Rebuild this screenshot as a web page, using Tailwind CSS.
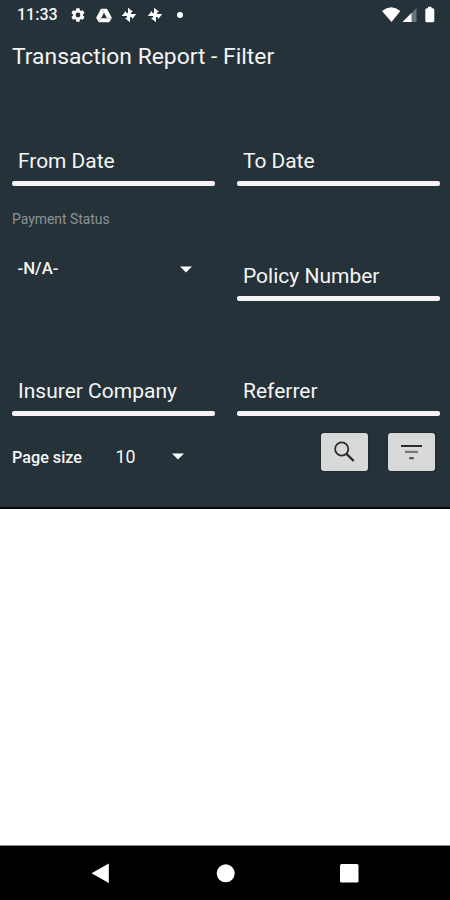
<!DOCTYPE html>
<html lang="en">
<head>
<meta charset="utf-8">
<title>Transaction Report - Filter</title>
<script src="https://cdn.jsdelivr.net/npm/@tailwindcss/browser@4"></script>
</head>
<body class="bg-white">
<svg class="hidden">
  <symbol id="pinwheel" viewBox="0 0 16 16">
    <g fill="#fff">
      <path d="M7 9V.8L12 4.700 10 5.500V8z"/>
      <path d="M7 9V.8L12 4.700 10 5.500V8z" transform="rotate(90 8 8)"/>
      <path d="M7 9V.8L12 4.700 10 5.500V8z" transform="rotate(180 8 8)"/>
      <path d="M7 9V.8L12 4.700 10 5.500V8z" transform="rotate(270 8 8)"/>
    </g>
  </symbol>
</svg>
<div class="flex flex-col w-[450px] h-[900px] overflow-hidden font-[Roboto,sans-serif] text-[#f5f5f5]">
  <main class="h-[509px] bg-[#263239] border-b-2 border-[#05090b] flex flex-col">
    <header class="h-[30px] flex items-center pl-[17px] pr-[14px]">
      <span class="w-[53px] text-[16px] font-medium whitespace-nowrap leading-[30px]">11:33</span>
      <svg class="size-4" viewBox="0 0 24 24"><path fill="#fff" fill-rule="evenodd" d="M19.4 13c.1-.6.1-1.4 0-2l2.1-1.600c.2-.2.3-.5.100-.700l-2-3.400c-.1-.3-.4-.4-.6-.3l-2.500 1-1.700-1-.4-2.600c0-.2-.2-.4-.5-.4h-4c-.2 0-.4.200-.5.400l-.4 2.600-1.700 1-2.400-1c-.3-.1-.5 0-.6.300l-2 3.400c-.1.2-.1.500.1.700L4.600 11c-.1.600-.1 1.400 0 2l-2.200 1.600c-.2.200-.2.500-.1.700l2 3.400c.1.300.4.400.6.300l2.400-1 1.700 1 .4 2.600c.1.200.3.400.5.400h4c.3 0 .5-.2.500-.4l.4-2.600 1.700-1 2.500 1c.2.100.5 0 .6-.3l2-3.400c.2-.2.100-.5-.1-.7zM12 15.600a3.600 3.600 0 1 1 0-7.200 3.600 3.600 0 0 1 0 7.200z"/></svg>
      <svg class="w-4 h-[15px] ml-[10px]" viewBox="0 0 16 15"><path fill="#fff" stroke="#fff" stroke-width="1.600" stroke-linejoin="round" d="M5.600 1.500h4.800l4.600 8.400-2.300 3.600H3.300L1 9.900z"/><path fill="#263239" d="M8 4.800 5 10.200h6z"/><path fill="none" stroke="#8d9599" stroke-width=".6" d="M8 4.800 6.200 1.600M5 10.200 3 13.500M11 10.200h4"/></svg>
      <svg class="size-4 ml-[9px]"><use href="#pinwheel"/></svg>
      <svg class="size-4 ml-[10px]"><use href="#pinwheel"/></svg>
      <span class="size-[6px] ml-[14px] rounded-full bg-white"></span>
      <svg class="ml-auto w-[54px] h-[18px]" viewBox="0 0 54 18"><path fill="#fff" d="M0 4.900Q9.200-2.300 18.400 4.900L9.500 16z"/><path fill="#69737a" d="M34.500 2v14h-14z"/><path fill="#fff" d="M29.500 7v9h-9z"/><path fill="#fff" d="M44.800 2.200h1.200V.8h3.600v1.400h1.200q1.500 0 1.500 1.500v11q0 1.500-1.500 1.500h-6q-1.500 0-1.500-1.500v-11q0-1.500 1.500-1.500z"/></svg>
    </header>
    <h1 class="h-[41px] pl-3 text-[22.850px] leading-[53px] whitespace-nowrap">Transaction Report - Filter</h1>
    <form class="grid grid-cols-[203px_203px] auto-rows-[115px] gap-x-[22px] pl-[11.500px]">
      <label class="flex flex-col justify-end"><span class="pl-[6.500px] text-[20.900px] leading-[30px] mb-[5px]">From Date</span><span class="h-[5px] rounded-[2px] bg-[#f8f3f7]"></span></label>
      <label class="flex flex-col justify-end"><span class="pl-[6.500px] text-[20.900px] leading-[30px] mb-[5px]">To Date</span><span class="h-[5px] rounded-[2px] bg-[#f8f3f7]"></span></label>
      <div class="pt-[23px]">
        <div class="pl-[.5px] text-[13.900px] leading-5 text-[#8b9296]">Payment Status</div>
        <div class="mt-[30px] h-5 pl-[6px] pr-[22.500px] flex items-center justify-between text-[16.800px] font-medium">-N/A-<svg class="w-3 h-[7px]" viewBox="0 0 12 7"><path fill="#fff" d="M0 .5h12L6 6.500z"/></svg></div>
      </div>
      <label class="flex flex-col justify-end"><span class="pl-[6.500px] text-[21px] leading-[30px] mb-[5px]">Policy Number</span><span class="h-[5px] rounded-[2px] bg-[#f8f3f7]"></span></label>
      <label class="flex flex-col justify-end"><span class="pl-[6.500px] text-[21px] leading-[30px] mb-[5px]">Insurer Company</span><span class="h-[5px] rounded-[2px] bg-[#f8f3f7]"></span></label>
      <label class="flex flex-col justify-end"><span class="pl-[6.500px] text-[21px] leading-[30px] mb-[5px]">Referrer</span><span class="h-[5px] rounded-[2px] bg-[#f8f3f7]"></span></label>
    </form>
    <div class="flex pl-3 pt-[17px] pr-[15px]">
      <span class="w-[103px] mt-[15px] text-[16.200px] leading-5 font-medium whitespace-nowrap">Page size</span>
      <span class="w-[57px] mt-[14px] pl-[.5px] text-[17.800px] leading-5">10</span>
      <svg class="w-3 h-[7px] mt-[20px]" viewBox="0 0 12 7"><path fill="#fff" d="M0 .5h12L6 6.500z"/></svg>
      <button class="ml-auto w-[47px] h-[38px] rounded-[3px] bg-[#d8dad9] shadow-[0_0_2px_#0009]"><svg class="w-full h-full" viewBox="0 0 47 38" fill="none" stroke="#2b2d2d"><circle cx="20.700" cy="16" r="6.600" stroke-width="1.800"/><path stroke-width="2.400" d="M25.500 20.800 32.700 28"/></svg></button>
      <button class="ml-[20px] w-[47px] h-[38px] rounded-[3px] bg-[#d8dad9] shadow-[0_0_2px_#0009]"><svg class="w-full h-full" viewBox="0 0 47 38"><path fill="#2b2d2d" d="M13 12h21v2H13z"/><path fill="#777" d="M17 17.800h13v2.200H17z"/><path fill="#444" d="M21.300 24.200h4.500v2h-4.500z"/></svg></button>
    </div>
  </main>
  <div class="flex-1 bg-white"></div>
  <nav class="h-[55px] bg-black border-t border-[#888]">
    <svg class="w-[450px] h-[54px]" viewBox="0 0 450 54" fill="#fff"><path d="M91.500 27.300 108.800 17.500v19.500z"/><circle cx="225.700" cy="27.300" r="9"/><rect x="340" y="18" width="18.500" height="18.500" rx="1.500"/></svg>
  </nav>
</div>
</body>
</html>
